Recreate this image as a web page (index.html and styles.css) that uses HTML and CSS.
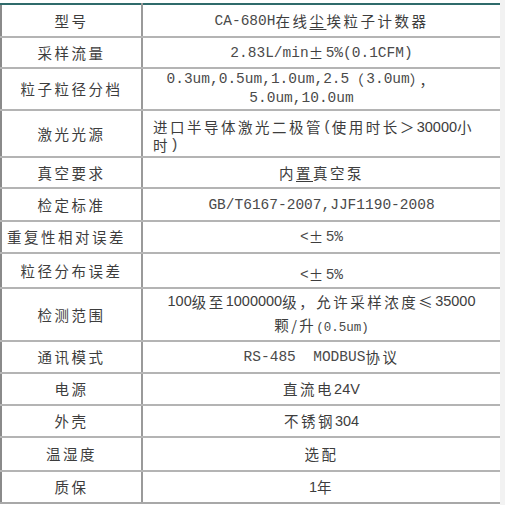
FILE: index.html
```html
<!DOCTYPE html>
<html lang="zh-CN">
<head>
<meta charset="utf-8">
<title>CA-680H 参数</title>
<link rel="stylesheet" href="styles.css">
</head>
<body>
<div class="sheet">
<table class="spec">
  <colgroup><col class="c-label"><col class="c-value"></colgroup>
  <tbody>
    <tr class="r33 first">
      <td class="label">型号</td>
      <td class="value"><span class="en">CA-680H</span>在线<span class="ul">尘</span>埃粒子计数器</td>
    </tr>
    <tr class="r31">
      <td class="label">采样流量</td>
      <td class="value"><span class="en">2.83L/min</span>±<span class="en">5%(0.1CFM)</span></td>
    </tr>
    <tr class="r42">
      <td class="label">粒子粒径分档</td>
      <td class="value lh19 shiftl"><span class="en">0.3um,0.5um,1.0um,2.5</span>（<span class="en">3.0um</span>），<br><span class="en">5.0um,10.0um</span></td>
    </tr>
    <tr class="r47">
      <td class="label">激光光源</td>
      <td class="value left lh18 down">进口半导体激光二极管<span class="en">(</span>使用时长＞<span class="num">30000</span>小<br>时<span class="en">)</span></td>
    </tr>
    <tr class="r31">
      <td class="label">真空要求</td>
      <td class="value">内<span class="ul">置</span>真空泵</td>
    </tr>
    <tr class="r33">
      <td class="label">检定标准</td>
      <td class="value"><span class="en">GB/T6167-2007,JJF1190-2008</span></td>
    </tr>
    <tr class="r32">
      <td class="label wide">重复性相对误差</td>
      <td class="value"><span class="en">&lt;</span>±<span class="en">5%</span></td>
    </tr>
    <tr class="r35">
      <td class="label">粒径分布误差</td>
      <td class="value low"><span class="en">&lt;</span>±<span class="en">5%</span></td>
    </tr>
    <tr class="r53">
      <td class="label">检测范围</td>
      <td class="value lh23"><span class="num">100</span>级至<span class="num">1000000</span>级，允许采样浓度≤<span class="num">35000</span><br>颗/升<span class="en sm">(0.5um)</span></td>
    </tr>
    <tr class="r32">
      <td class="label">通讯模式</td>
      <td class="value"><span class="en">RS-485&nbsp; MODBUS</span>协议</td>
    </tr>
    <tr class="r32">
      <td class="label">电源</td>
      <td class="value">直流电<span class="num">24V</span></td>
    </tr>
    <tr class="r32">
      <td class="label">外壳</td>
      <td class="value">不锈钢<span class="num">304</span></td>
    </tr>
    <tr class="r34">
      <td class="label">温湿度</td>
      <td class="value">选配</td>
    </tr>
    <tr class="r32 last">
      <td class="label">质保</td>
      <td class="value"><span class="num">1</span>年</td>
    </tr>
  </tbody>
</table>
</div>
</body>
</html>
```

FILE: styles.css
```css
html, body {
  margin: 0;
  padding: 0;
}
body {
  background: #f2f2f2;
  width: 505px;
  height: 505px;
  overflow: hidden;
}
.sheet {
  width: 500px;
  height: 505px;
  background: #ffffff;
  padding-top: 3px;
  box-sizing: border-box;
}
.spec {
  width: 500px;
  border-collapse: collapse;
  table-layout: fixed;
  font-family: "Noto Sans CJK SC", "Noto Sans", sans-serif;
  font-size: 14.5px;
  letter-spacing: 2.5px;
  color: #3d3d3d;
}
.c-label { width: 141px; }
.spec td {
  padding: 0;
  text-align: center;
  vertical-align: middle;
  line-height: 18px;
  border-top: 2px solid #b4b4b4;
  border-bottom: 2px solid #b4b4b4;
}
.spec td.label {
  border-left: 2px solid #8a8a8a;
  border-right: 2px solid #9a9a9a;
  white-space: nowrap;
}
.spec td.label.wide {
  letter-spacing: 2.5px;
  padding-right: 10px;
}
.spec td.value {
  border-right: none;
}
.spec tr.first td {
  border-top: 2px solid #2f6b6b;
}
.spec tr.last td {
  border-bottom: 2px solid #a8a8a8;
}
.r31 { height: 31px; }
.r32 { height: 32px; }
.r33 { height: 33px; }
.r34 { height: 34px; }
.r35 { height: 35px; }
.r42 { height: 42px; }
.r47 { height: 47px; }
.r53 { height: 53px; }

.value.left {
  text-align: left;
  padding-left: 10px;
}
.value.shiftl { padding-right: 40px; }
.value.lh18 { line-height: 18px; }
.value.lh19 { line-height: 19px; }
.value.lh23 { line-height: 23px; }
.value.down { padding-top: 4px; }
.value.low { padding-top: 8px; }

.en {
  font-family: "Liberation Mono", "DejaVu Sans Mono", monospace;
  letter-spacing: 0;
  font-size: 14.5px;
  color: #4a4a4a;
  vertical-align: top;
}
.en.sm {
  font-size: 12.5px;
  vertical-align: baseline;
}
.num {
  font-family: "Liberation Sans", Arial, sans-serif;
  letter-spacing: 0;
  font-size: 14.5px;
  vertical-align: top;
}
.ul {
  text-decoration: underline;
  text-underline-offset: 2px;
}
```
